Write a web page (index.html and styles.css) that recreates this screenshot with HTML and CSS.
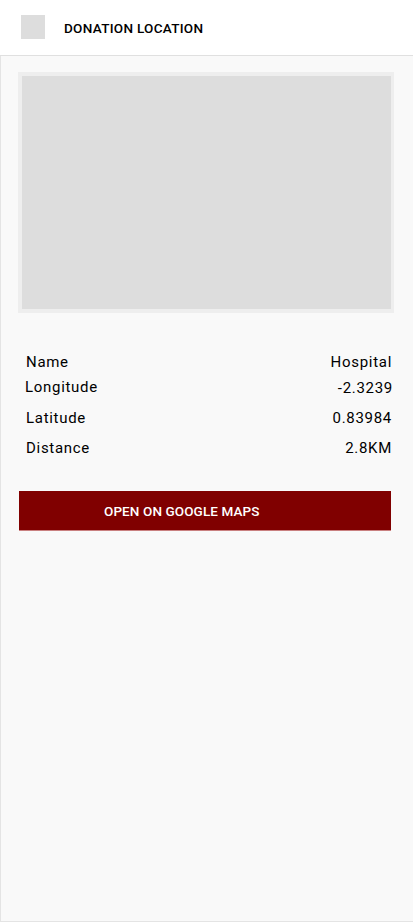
FILE: index.html
```html
<!DOCTYPE html>
<html>
<head>
<meta charset="utf-8">
<link rel="stylesheet" href="styles.css">
</head>
<body>
<header class="topbar">
  <div class="topbar-icon"></div>
  <div class="topbar-title">DONATION LOCATION</div>
</header>
<main class="content">
  <div class="map"><div class="map-inner"></div></div>
  <div class="details">
    <div class="row row-name"><span class="label">Name</span><span class="value">Hospital</span></div>
    <div class="row row-lon"><span class="label label-lon">Longitude</span><span class="value value-lon">-2.3239</span></div>
    <div class="row row-lat"><span class="label">Latitude</span><span class="value">0.83984</span></div>
    <div class="row row-dist"><span class="label">Distance</span><span class="value">2.8KM</span></div>
  </div>
  <div class="button">OPEN ON GOOGLE MAPS</div>
</main>
</body>
</html>
```
FILE: styles.css
```css
* { box-sizing: border-box; }
html, body { margin: 0; padding: 0; }
body {
  width: 413px;
  height: 922px;
  font-family: Roboto, "Liberation Sans", sans-serif;
  background: #ffffff;
  display: flex;
  flex-direction: column;
}
.topbar {
  height: 56px;
  flex: none;
  display: flex;
  align-items: center;
  background: #ffffff;
  border-bottom: 1px solid #e0e0e0;
  width: 413px;
  padding-left: 21px;
}
.topbar-icon {
  width: 24px;
  height: 24px;
  background: #dddddd;
  margin-top: -1px;
}
.topbar-title {
  margin-left: 19px;
  font-size: 13.5px;
  font-weight: 500;
  color: #000;
  letter-spacing: 0.3px;
  margin-top: 0;
}
.content {
  flex: 1;
  background: #f9f9f9;
  border-left: 1px solid #e4e4e4;
  border-bottom: 1px solid #e4e4e4;
  padding: 16px 0 0 17px;
  display: flex;
  flex-direction: column;
}
.map {
  width: 376px;
  height: 241px;
  border: 4px solid #eeeeee;
  border-right-width: 3px;
}
.map-inner {
  width: 100%;
  height: 100%;
  background: #dddddd;
}
.details {
  margin-top: 39px;
  width: 376px;
  display: flex;
  flex-direction: column;
}
.row {
  display: flex;
  justify-content: space-between;
  align-items: center;
  height: 21px;
  font-size: 15px;
  letter-spacing: 0.7px;
  color: #000;
  padding-left: 8px;
  padding-right: 2px;
}
.row-name { margin-top: -1px; }
.row-lon { margin-top: 4px; }
.row-lat { margin-top: 10px; }
.row-dist { margin-top: 9px; }
.label-lon { margin-left: -1px; }
.value-lon { margin-right: -1px; margin-top: 2px; }
.button {
  margin-top: 33px;
  margin-left: 1px;
  width: 372px;
  height: 40px;
  background: #800000;
  border-bottom: 1px solid #c98080;
  color: #ffffff;
  font-size: 13.5px;
  font-weight: 500;
  letter-spacing: 0.1px;
  display: flex;
  align-items: center;
  padding-left: 85px;
}
```
